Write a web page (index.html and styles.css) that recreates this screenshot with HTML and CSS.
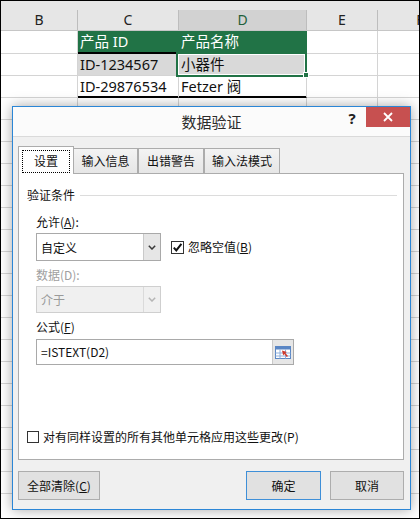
FILE: index.html
```html
<!DOCTYPE html>
<html lang="zh-CN">
<head>
<meta charset="utf-8">
<title>数据验证</title>
<link rel="stylesheet" href="styles.css">
</head>
<body>
<div class="frame">
  <div class="sheet">
    <div class="band"></div>
    <div class="row head">
      <div class="hc">B</div><div class="hc">C</div><div class="hc hsel">D</div><div class="hc">E</div><div class="hc">F</div>
    </div>
    <div class="row r1">
      <div class="cell"></div><div class="cell th thl">产品 ID</div><div class="cell th">产品名称</div><div class="cell"></div><div class="cell"></div>
    </div>
    <div class="row">
      <div class="cell"></div><div class="cell grey">ID-1234567</div><div class="cell grey">小器件</div><div class="cell"></div><div class="cell"></div>
    </div>
    <div class="row">
      <div class="cell"></div><div class="cell tb">ID-29876534</div><div class="cell tb">Fetzer 阀</div><div class="cell"></div><div class="cell"></div>
    </div>
    <div class="row"><div class="cell"></div><div class="cell"></div><div class="cell"></div><div class="cell"></div><div class="cell"></div></div>
    <div class="row"><div class="cell"></div><div class="cell"></div><div class="cell"></div><div class="cell"></div><div class="cell"></div></div>
    <div class="row"><div class="cell"></div><div class="cell"></div><div class="cell"></div><div class="cell"></div><div class="cell"></div></div>
    <div class="row"><div class="cell"></div><div class="cell"></div><div class="cell"></div><div class="cell"></div><div class="cell"></div></div>
    <div class="row"><div class="cell"></div><div class="cell"></div><div class="cell"></div><div class="cell"></div><div class="cell"></div></div>
    <div class="row"><div class="cell"></div><div class="cell"></div><div class="cell"></div><div class="cell"></div><div class="cell"></div></div>
    <div class="row"><div class="cell"></div><div class="cell"></div><div class="cell"></div><div class="cell"></div><div class="cell"></div></div>
    <div class="row"><div class="cell"></div><div class="cell"></div><div class="cell"></div><div class="cell"></div><div class="cell"></div></div>
    <div class="row"><div class="cell"></div><div class="cell"></div><div class="cell"></div><div class="cell"></div><div class="cell"></div></div>
    <div class="row"><div class="cell"></div><div class="cell"></div><div class="cell"></div><div class="cell"></div><div class="cell"></div></div>
    <div class="row"><div class="cell"></div><div class="cell"></div><div class="cell"></div><div class="cell"></div><div class="cell"></div></div>
    <div class="row"><div class="cell"></div><div class="cell"></div><div class="cell"></div><div class="cell"></div><div class="cell"></div></div>
    <div class="row"><div class="cell"></div><div class="cell"></div><div class="cell"></div><div class="cell"></div><div class="cell"></div></div>
    <div class="row"><div class="cell"></div><div class="cell"></div><div class="cell"></div><div class="cell"></div><div class="cell"></div></div>
    <div class="row"><div class="cell"></div><div class="cell"></div><div class="cell"></div><div class="cell"></div><div class="cell"></div></div>
    <div class="row"><div class="cell"></div><div class="cell"></div><div class="cell"></div><div class="cell"></div><div class="cell"></div></div>
    <div class="row"><div class="cell"></div><div class="cell"></div><div class="cell"></div><div class="cell"></div><div class="cell"></div></div>
    <div class="row"><div class="cell"></div><div class="cell"></div><div class="cell"></div><div class="cell"></div><div class="cell"></div></div>
  </div>
  <div class="selbox"></div>
  <div class="handle"></div>

  <div class="dialog">
    <div class="titlebar">
      <span class="title">数据验证</span>
      <span class="help">?</span>
      <span class="close"><svg width="10" height="10" viewBox="0 0 10 10"><path d="M1 1L9 9M9 1L1 9" stroke="#fff" stroke-width="1.8" fill="none"/></svg></span>
    </div>
    <div class="dbody">
      <div class="tabs">
        <div class="tab active"><span class="focus">设置</span></div>
        <div class="tab t2">输入信息</div>
        <div class="tab t3">出错警告</div>
        <div class="tab t4">输入法模式</div>
      </div>
      <div class="panel">
        <div class="legend"><span>验证条件</span><span class="rule"></span></div>
        <div class="fields">
          <div class="lbl l-allow">允许(<u>A</u>):</div>
          <div class="crow">
            <div class="combo">
              <span class="ctext">自定义</span>
              <span class="dd"><svg width="8" height="5" viewBox="0 0 8 5"><path d="M0.8 0.8L4 4L7.2 0.8" stroke="#3a3a3a" stroke-width="1.5" fill="none"/></svg></span>
            </div>
            <span class="cb checked"><svg width="11" height="11" viewBox="0 0 11 11"><path d="M1.8 5.6L4.3 8.4L9.4 1.8" stroke="#111" stroke-width="2" fill="none"/></svg></span>
            <span class="cblabel">忽略空值(<u>B</u>)</span>
          </div>
          <div class="lbl dim l-data">数据(D):</div>
          <div class="combo disabled">
            <span class="ctext">介于</span>
            <span class="dd"><svg width="8" height="5" viewBox="0 0 8 5"><path d="M0.8 0.8L4 4L7.2 0.8" stroke="#b5b5b5" stroke-width="1.5" fill="none"/></svg></span>
          </div>
          <div class="lbl l-formula">公式(<u>F</u>)</div>
          <div class="formula">
            <span class="ftext">=ISTEXT(D2)</span>
            <span class="rangebtn"><svg width="16" height="13" viewBox="0 0 16 13">
              <rect x="0.5" y="0.5" width="15" height="12" fill="#fff" stroke="#5a86c4"/>
              <rect x="0.5" y="0.5" width="15" height="3" fill="#5a86c4"/>
              <path d="M0.5 7H15.5M0.5 10H15.5M5 3.5V12.5M10.5 3.5V12.5" stroke="#8fb0dd" stroke-width="1"/>
              <path d="M7 4.5L12 6L10.3 7L13 10L11.8 11L9.2 8L8.2 9.6Z" fill="#d0392b"/>
            </svg></span>
          </div>
        </div>
        <div class="applyrow">
          <span class="cb"></span>
          <span class="cblabel">对有同样设置的所有其他单元格应用这些更改(P)</span>
        </div>
      </div>
      <div class="buttons">
        <button class="btn b-clear">全部清除(<u>C</u>)</button>
        <span class="spacer"></span>
        <button class="btn b-ok">确定</button>
        <button class="btn b-cancel">取消</button>
      </div>
    </div>
  </div>
</div>
</body>
</html>
```
FILE: styles.css
```css
* { box-sizing: border-box; margin: 0; padding: 0; }
body { margin: 0; background: #fff; font-family: "Noto Sans CJK SC", sans-serif; }

.frame {
  position: relative;
  width: 420px;
  height: 519px;
  border: 1px solid #000;
  overflow: hidden;
  background: #fff;
}

/* ---------- spreadsheet ---------- */
.band { height: 9px; background: #e6e6e6; }
.row {
  display: grid;
  grid-template-columns: 77px 101px 128px 71px 85px;
  height: 22px;
}
.head {
  height: 21px;
  background: #e6e6e6;
  border-bottom: 1px solid #c6c6c6;
}
.hc {
  border-right: 1px solid #bdbdbd;
  text-align: center;
  font-family: "Noto Sans", sans-serif;
  font-size: 14px;
  line-height: 20px;
  color: #222;
}
.hsel { background: #d2d2d2; color: #1f5f3a; }
.r1 { height: 23px; }
.cell {
  border-right: 1px solid #d4d4d4;
  border-bottom: 1px solid #d4d4d4;
  font-family: "Noto Sans", "Noto Sans CJK SC", sans-serif;
  font-size: 14.5px;
  line-height: 21px;
  padding-left: 2px;
  color: #111;
  white-space: nowrap;
  overflow: hidden;
}
.th { background: #217346; color: #fff; border-right-color: #217346; border-bottom-color: #000; }
.thl { box-shadow: inset 0 -1px 0 #000; }
.grey { background: #d9d9d9; }
.tb { border-bottom-color: #000; box-shadow: inset 0 -1px 0 #000; }

.selbox {
  position: absolute;
  left: 175px;
  top: 51px;
  width: 131px;
  height: 25px;
  border: 2px solid #217346;
  box-shadow: inset 0 0 0 1px #fff;
}
.handle {
  position: absolute;
  left: 302px;
  top: 71px;
  width: 6px;
  height: 6px;
  background: #217346;
  border: 1px solid #fff;
}

/* ---------- dialog ---------- */
.dialog {
  position: absolute;
  left: 11px;
  top: 105px;
  width: 399px;
  height: 404px;
  border: 1px solid #2b86d6;
  background: #f0f0f0;
  box-shadow: 0 0 12px rgba(0, 0, 0, 0.35);
  display: flex;
  flex-direction: column;
  font-size: 12px;
  color: #111;
}
.titlebar {
  position: relative;
  height: 30px;
  flex: none;
  background: #fbfbfb;
  border-bottom: 1px solid #dadada;
  text-align: center;
}
.title { font-size: 15px; line-height: 29px; color: #2b2b2b; }
.help {
  position: absolute;
  left: 333px;
  top: 1px;
  width: 12px;
  font-family: "Noto Sans", sans-serif;
  font-weight: bold;
  font-size: 15px;
  line-height: 20px;
  color: #222;
}
.close {
  position: absolute;
  right: 0;
  top: 0;
  width: 44px;
  height: 20px;
  background: #c75050;
  display: flex;
  align-items: center;
  justify-content: center;
}

.dbody {
  flex: 1;
  display: flex;
  flex-direction: column;
  padding: 9px 6px 0 5px;
}
.tabs { display: flex; align-items: flex-end; height: 27px; flex: none; }
.tab {
  height: 25px;
  border: 1px solid #acacac;
  border-bottom: none;
  background: linear-gradient(#f3f3f3, #e6e6e6);
  display: flex;
  align-items: center;
  justify-content: center;
  line-height: 16px;
}
.tab.active {
  position: relative;
  z-index: 1;
  width: 56px;
  height: 28px;
  margin-bottom: -1px;
  background: #fff;
  align-items: flex-start;
  padding-top: 3px;
}
.focus {
  display: block;
  width: 48px;
  height: 23px;
  border: 1px dotted #000;
  text-align: center;
  line-height: 19px;
}
.t2 { width: 65px; margin-left: -1px; }
.t3 { width: 66px; }
.t4 { width: 76px; }

.panel {
  flex: none;
  height: 287px;
  background: #fff;
  border: 1px solid #acacac;
  display: flex;
  flex-direction: column;
}
.legend {
  display: flex;
  align-items: center;
  margin: 13px 6px 0 8px;
  line-height: 16px;
}
.rule { flex: 1; height: 1px; background: #dcdcdc; margin-left: 5px; }
.fields { padding-left: 17px; }
.lbl { line-height: 16px; }
.l-allow { margin-top: 11px; }
.l-data { margin-top: 6px; }
.l-formula { margin-top: 6px; }
.dim { color: #a0a0a0; }
.crow { display: flex; align-items: center; margin-top: 3px; }
.combo {
  width: 125px;
  height: 28px;
  border: 1px solid #a9a9a9;
  background: #fff;
  display: flex;
  align-items: center;
}
.ctext { flex: 1; padding-left: 4px; }
.dd {
  width: 17px;
  height: 100%;
  background: #e6e6e6;
  border-left: 1px solid #c9c9c9;
  display: flex;
  align-items: center;
  justify-content: center;
}
.combo.disabled {
  height: 27px;
  margin-top: 3px;
  background: #f0f0f0;
  border-color: #cfcfcf;
  color: #9a9a9a;
}
.combo.disabled .dd { background: #f0f0f0; border-left-color: #dadada; }
.cb {
  width: 13px;
  height: 13px;
  border: 1px solid #333;
  background: #fff;
  display: inline-flex;
  align-items: center;
  justify-content: center;
  flex: none;
}
.crow .cb { margin-left: 10px; }
.cblabel { margin-left: 4px; line-height: 16px; }
.formula {
  margin-top: 4px;
  width: 258px;
  height: 26px;
  border: 1px solid #a9a9a9;
  background: #fff;
  display: flex;
  align-items: stretch;
}
.ftext { flex: 1; padding-left: 4px; line-height: 24px; }
.rangebtn {
  width: 21px;
  background: #e6e6e6;
  border-left: 1px solid #c9c9c9;
  display: flex;
  align-items: center;
  justify-content: center;
}
.applyrow {
  margin-top: auto;
  margin-bottom: 14px;
  padding-left: 8px;
  display: flex;
  align-items: center;
}
.applyrow .cb { width: 12px; height: 12px; }

.buttons { display: flex; margin-top: 11px; flex: none; }
.spacer { flex: 1; }
.btn {
  height: 29px;
  border: 1px solid #adadad;
  background: #e1e1e1;
  font-family: "Noto Sans CJK SC", sans-serif;
  font-size: 12px;
  color: #111;
}
.b-clear { width: 82px; }
.b-ok { width: 75px; border-color: #3e8fd8; }
.b-cancel { width: 74px; margin-left: 9px; }
```
